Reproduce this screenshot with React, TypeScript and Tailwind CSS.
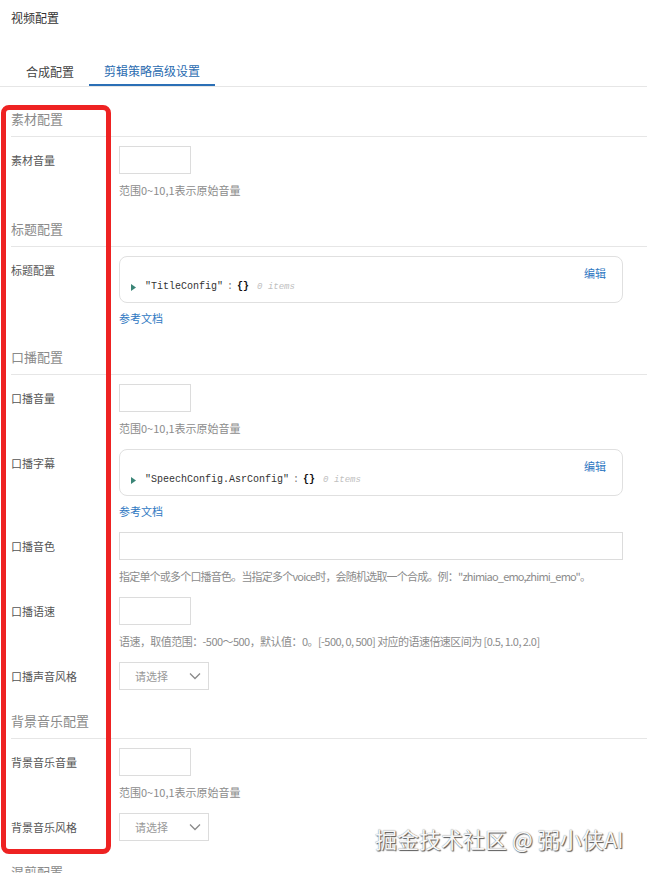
import { ReactNode } from 'react'

const FONT = "font-['Noto_Sans_CJK_SC','Liberation_Sans',sans-serif]"

function SectionHeader({ title }: { title: string }) {
  return (
    <div className="mt-[7px] border-b border-[#e6e6e6] pb-[6px] text-[13px] leading-[22px] text-[#8a8a8a]">
      {title}
    </div>
  )
}

// padding instead of margin so the gap doesn't collapse into the next header
function FormItem({ label, children, last }: { label: string; children: ReactNode; last?: boolean }) {
  return (
    <div className={`flex ${last ? 'pb-[13px]' : 'pb-[11px]'}`}>
      <div className="w-[108px] shrink-0 text-[11px] leading-[28px] text-[#555]">{label}</div>
      <div className="min-w-0 flex-1 pr-[24px]">{children}</div>
    </div>
  )
}

function Help({ children, tracking = '' }: { children: ReactNode; tracking?: string }) {
  return (
    <div className={`mt-[6px] whitespace-nowrap text-[11px] leading-[20px] text-[#8c8c8c] ${tracking}`}>
      {children}
    </div>
  )
}

function NumberInput() {
  return <input type="text" className="block h-[28px] w-[72px] border border-[#dcdcdc] bg-white px-2 text-[12px] outline-none" />
}

function Select() {
  return (
    <div className="flex h-[28px] w-[90px] items-center justify-between border border-[#dcdcdc] bg-white pl-[15px] pr-[7px]">
      <span className="text-[11px] text-[#999]">请选择</span>
      <svg width="12" height="8" viewBox="0 0 12 8" fill="none" stroke="#8a8a8a" strokeWidth="1.3">
        <path d="M1 1.5l5 5 5-5" />
      </svg>
    </div>
  )
}

// collapsed json viewer with an edit action
function JsonField({ name }: { name: string }) {
  return (
    <div>
      <div className="h-[47px] rounded-[8px] border border-[#e0e0e0] bg-white pb-[8px] pl-[11px] pr-[16px] pt-[9px]">
        <div className="flex h-[14px] justify-end text-[11px] leading-[14px] text-[#2f78c2]">编辑</div>
        <div className="flex h-[14px] items-center font-['Liberation_Mono',monospace] text-[10px] leading-[14px]">
          <svg width="5" height="7" viewBox="0 0 5 7" className="shrink-0">
            <path d="M0 0l5 3.5L0 7z" fill="#3b8577" />
          </svg>
          <span className="ml-[9px] text-[#333]">"{name}"</span>
          <span className="mx-[4px] text-[#777]">:</span>
          <span className="font-bold text-[#111]">{'{}'}</span>
          <span className="ml-[8px] text-[9px] italic text-[#c0c0c0]">0 items</span>
        </div>
      </div>
      <div className="mt-[5px] text-[11px] leading-[20px] text-[#2f78c2]">参考文档</div>
    </div>
  )
}

const RANGE_TIP = '范围0~10,1表示原始音量'

export default function App() {
  return (
    <div className={`relative h-[873px] overflow-hidden bg-white ${FONT}`}>
      <div className="pl-[11px] text-[12px] leading-[36px] text-[#333]">视频配置</div>

      <div className="mt-[20px] flex border-b border-[#e6e6e6] pl-[11px] text-[12px]">
        <div className="flex h-[30px] items-center px-[15px] pt-[2px] text-[#444]">合成配置</div>
        <div className="flex h-[30px] items-center border-b-2 border-[#2b6fb6] px-[15px] pt-[2px] text-[#2b6cb0]">剪辑策略高级设置</div>
      </div>

      <div className="mt-[21px] pl-[11px]">
        <SectionHeader title="素材配置" />
        <div className="pt-[9px]">
          <FormItem label="素材音量">
            <NumberInput />
            <Help>{RANGE_TIP}</Help>
          </FormItem>
        </div>

        <SectionHeader title="标题配置" />
        <div className="pt-[9px]">
          <FormItem label="标题配置">
            <JsonField name="TitleConfig" />
          </FormItem>
        </div>

        <SectionHeader title="口播配置" />
        <div className="pt-[9px]">
          <FormItem label="口播音量">
            <NumberInput />
            <Help>{RANGE_TIP}</Help>
          </FormItem>
          <FormItem label="口播字幕">
            <JsonField name="SpeechConfig.AsrConfig" />
          </FormItem>
          <FormItem label="口播音色">
            <input type="text" className="block h-[28px] w-full border border-[#dcdcdc] bg-white px-2 text-[12px] outline-none" />
            <Help tracking="tracking-[-0.8px]">指定单个或多个口播音色。当指定多个voice时，会随机选取一个合成。例："zhimiao_emo,zhimi_emo"。</Help>
          </FormItem>
          <FormItem label="口播语速">
            <NumberInput />
            <Help tracking="tracking-[-0.55px]">语速，取值范围：-500～500，默认值：0。[-500, 0, 500] 对应的语速倍速区间为 [0.5, 1.0, 2.0]</Help>
          </FormItem>
          <FormItem label="口播声音风格" last>
            <Select />
          </FormItem>
        </div>

        <SectionHeader title="背景音乐配置" />
        <div className="pt-[9px]">
          <FormItem label="背景音乐音量">
            <NumberInput />
            <Help>{RANGE_TIP}</Help>
          </FormItem>
          <FormItem label="背景音乐风格" last>
            <Select />
          </FormItem>
        </div>

        <SectionHeader title="混剪配置" />
      </div>

      {/* highlight frame around the label column */}
      <div className="pointer-events-none absolute left-[1px] top-[105px] h-[749px] w-[110px] rounded-[8px] border-[5px] border-[#ee2222]" />

      <div className="pointer-events-none absolute left-[375px] top-[824px] text-[22px] leading-[28px] text-[#f7f7f7] [text-shadow:1px_1px_1px_#555,0_0_1px_#777]">
        掘金技术社区 @ 弼小侠AI
      </div>
    </div>
  )
}
